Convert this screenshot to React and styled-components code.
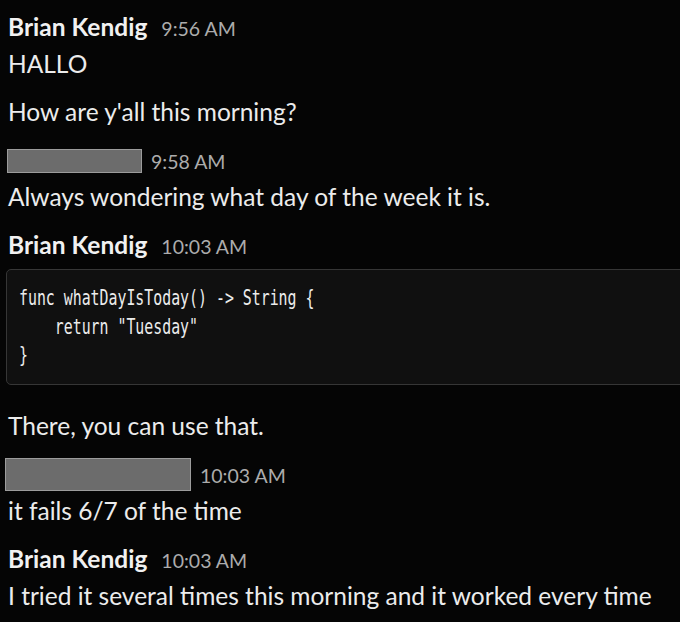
import React from "react";
import styled, { createGlobalStyle } from "styled-components";

const Global = createGlobalStyle`
  html, body { margin: 0; padding: 0; background: #050505; overflow: hidden; }
  body { font-family: Lato, "Noto Sans", sans-serif; }
`;

const Feed = styled.div`
  width: 680px;
  height: 622px;
  padding: 8px 0 0 8px;
  box-sizing: border-box;
  background: #050505;
  display: flex;
  flex-direction: column;
  gap: 11px;
  overflow: hidden;
`;

const Message = styled.div`
  display: flex;
  flex-direction: column;
`;

const Header = styled.div`
  display: flex;
  align-items: center;
  gap: ${(p) => (p.$redacted ? "9px" : "14px")};
  height: 37px;
`;

const Name = styled.span`
  font-weight: 700;
  font-size: 24.5px;
  color: #f1f1f1;
  line-height: 37px;
`;

const Redacted = styled.span`
  display: inline-block;
  width: ${(p) => p.$w}px;
  height: ${(p) => p.$h}px;
  margin-left: ${(p) => p.$ml || 0}px;
  margin-top: ${(p) => p.$mt || 0}px;
  background: #6c6c6c;
  border: 1px solid #9c9c9c;
  box-sizing: border-box;
`;

const Time = styled.span`
  font-size: 19.5px;
  color: #acacac;
  line-height: 37px;
  padding-top: 3px;
`;

const Body = styled.div`
  font-size: 24.5px;
  line-height: 37px;
  color: #ececec;
  white-space: nowrap;
`;

const CodeBlock = styled.div`
  margin: 6px -30px 22px -2px;
  padding: 14px 12px 12px 12px;
  background: #101010;
  border: 1px solid #363636;
  border-radius: 5px;
  height: 116px;
  box-sizing: border-box;
  display: flex;
  flex-direction: column;
`;

const CodeLine = styled.div`
  font-family: "DejaVu Sans Mono", "Liberation Mono", monospace;
  font-size: 21px;
  line-height: 28.5px;
  color: #ececec;
  white-space: pre;
  transform: scaleX(0.708);
  transform-origin: left center;
`;

export default function App() {
  return (
    <>
      <Global />
      <Feed>
        <Message>
          <Header>
            <Name>Brian Kendig</Name>
            <Time>9:56 AM</Time>
          </Header>
          <Body>HALLO</Body>
        </Message>
        <Message>
          <Body>How are y'all this morning?</Body>
        </Message>
        <Message>
          <Header $redacted>
            <Redacted $w={135} $h={24} $ml={-1} $mt={2} />
            <Time>9:58 AM</Time>
          </Header>
          <Body>Always wondering what day of the week it is.</Body>
        </Message>
        <Message>
          <Header>
            <Name>Brian Kendig</Name>
            <Time>10:03 AM</Time>
          </Header>
          <CodeBlock>
            <CodeLine>{`func whatDayIsToday() -> String {`}</CodeLine>
            <CodeLine>{`    return "Tuesday"`}</CodeLine>
            <CodeLine>{`}`}</CodeLine>
          </CodeBlock>
          <Body>There, you can use that.</Body>
        </Message>
        <Message>
          <Header $redacted>
            <Redacted $w={186} $h={33} $ml={-3} $mt={1} />
            <Time>10:03 AM</Time>
          </Header>
          <Body>it fails 6/7 of the time</Body>
        </Message>
        <Message>
          <Header>
            <Name>Brian Kendig</Name>
            <Time>10:03 AM</Time>
          </Header>
          <Body>I tried it several times this morning and it worked every time</Body>
        </Message>
      </Feed>
    </>
  );
}
